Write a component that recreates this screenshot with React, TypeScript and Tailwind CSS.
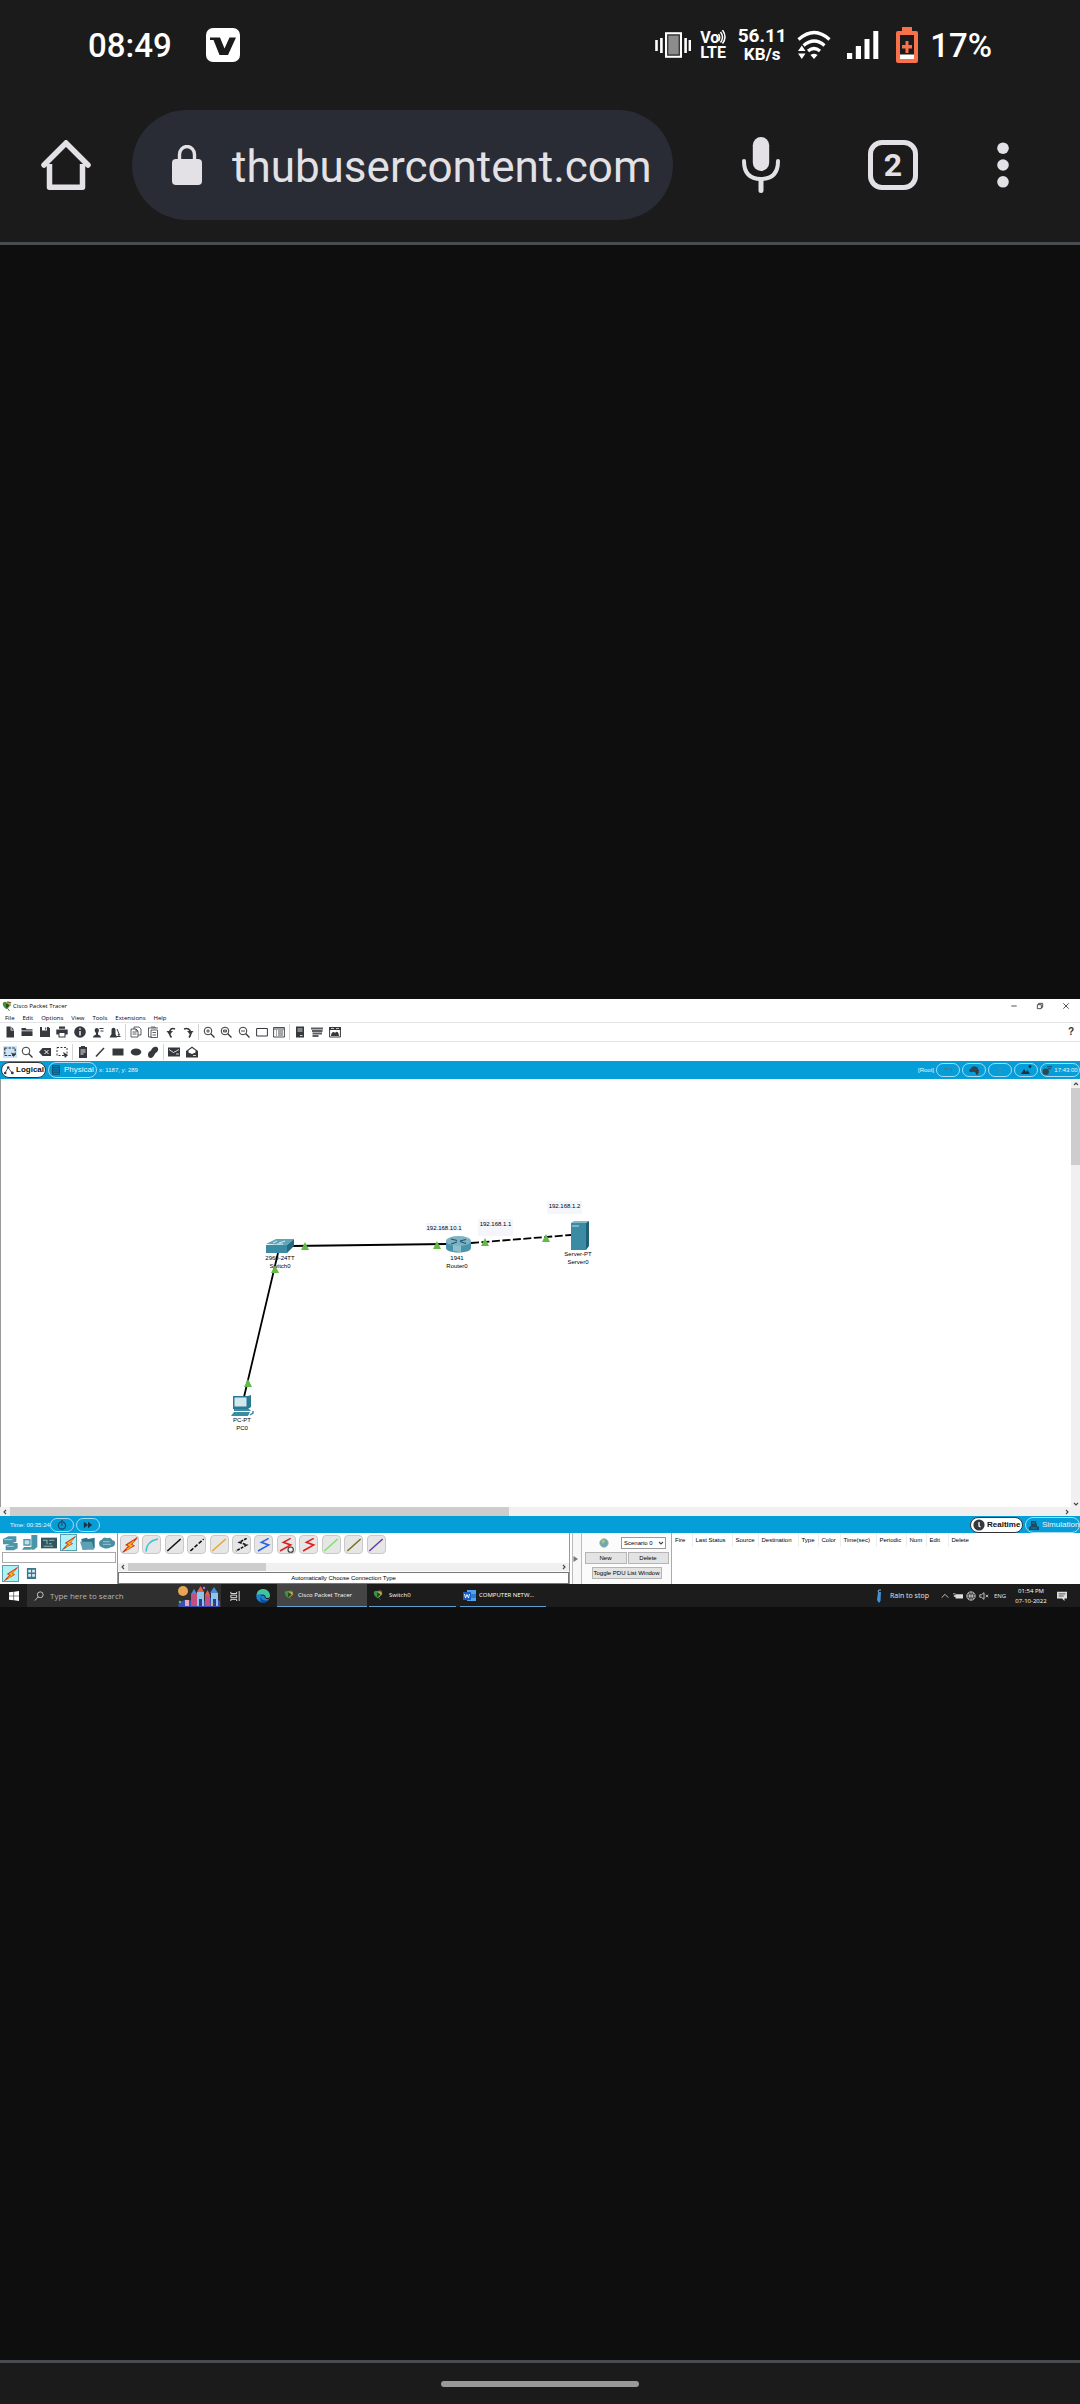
import type { ReactNode } from "react";

const DARK = "#35383c";

function Glyph({ children, className = "size-3" }: { children: ReactNode; className?: string }) {
  return (
    <svg viewBox="0 0 12 12" className={className + " block shrink-0"} fill="none" stroke={DARK} strokeWidth="1" aria-hidden="true">
      {children}
    </svg>
  );
}

const solid = { fill: DARK, stroke: "none" };

const fileTools: [string, ReactNode][] = [
  ["New", <path {...solid} d="M2.5.5h4.2v4h3.3v7H2.5zM7.5.7 10 3.7H7.5z" />],
  ["Open", <path {...solid} d="M.5 2h4l1 1.2h6v1.3H.5zM.5 5.2h11V10H.5z" />],
  ["Save", <path {...solid} fillRule="evenodd" d="M1 1h8.5L11 2.6V11H1zM3 1h5v3.5H3zM6.2 1.5v2.3h1V1.5z" />],
  ["Print", <path {...solid} fillRule="evenodd" d="M3 .5h6v2.3H3zM.3 3.5h11.4v5H9.5v3h-7v-3H.3zM3.5 7v3.5h5V7z" />],
  ["Activity Wizard", <><circle {...solid} cx="6" cy="6" r="5.8" /><path stroke="#fff" strokeWidth="1.4" d="M6 2.3v1.4M6 5v4.5" /></>],
  ["User Profile", <><path {...solid} d="M1 11.5c0-2 2-2.500 3-3V7C2 5 2.500 2 4.800 2S7.500 5 6 7v1.500c1 .5 3 1 3 3z" /><path d="M7.500 2.500h4M8.500 5h3" /></>],
  ["Network Wizard", <><path {...solid} d="M.5 11.500 2.500 8V4c0-3 4-3 4 0v4l1.500 3.500z" /><path d="M8 3l2.500 6M6.500 10.500h5M9 8l1.500 2.500" /></>],
];

const editTools: [string, ReactNode][] = [
  ["Copy", <path strokeWidth=".8" d="M1 3h5l2 2v6H1zM4 3V1h5l2 2v6H8M2.500 6h4M2.500 8h4M6 3v2h2" />],
  ["Paste", <path strokeWidth=".8" d="M1 2h10M1.500 2v9h3M4 4h6.500v7.500H4zM4 1h4v1M5.500 6.500h3.500M5.500 9h3.500" />],
  ["Undo", <><path strokeWidth="1.600" d="M6.500 11.500C4.500 9 4 6.500 5 4.500q1.500-3 5-1.500" /><path {...solid} d="M1.500 5h6.500L4.500 9z" /></>],
  ["Redo", <><path strokeWidth="1.600" d="M7 11.500C9 9 9 6.500 8 4.500Q6 1.500 2 3" /><path {...solid} d="M5 5h6.500L8.500 9z" /></>],
];

function Lens({ children }: { children?: ReactNode }) {
  return (
    <>
      <circle cx="5" cy="5" r="3.800" />
      <path strokeWidth="1.300" d="M7.800 7.800 11.500 11.500" />
      {children}
    </>
  );
}

const zoomTools: [string, ReactNode][] = [
  ["Zoom In", <Lens><path strokeWidth=".8" d="M3 5h4M5 3v4" /></Lens>],
  ["Zoom Reset", <Lens><path strokeWidth=".8" d="M3.500 4h3v2h-3zM5 4v2" /></Lens>],
  ["Zoom Out", <Lens><path strokeWidth=".9" d="M3 5h4" /></Lens>],
  ["Viewport", <path d="M.6 2.500h10.800v7.500H.6z" />],
  ["Workspace List", <path strokeWidth=".9" d="M.6 1.500h10.800v9.500H.6zM.6 3h10.800M3 5h1M5 5h5M3 7h1M5 7h5M3 9h1M5 9h5" />],
];

const paletteTools: [string, ReactNode][] = [
  ["Notes", <><path {...solid} d="M2 .5h8v11H2z" /><path stroke="#fff" strokeWidth=".8" d="M3.500 3h5M3.500 5h5M6 9.500h2.500" /></>],
  ["Custom Devices", <path fill="#5b5e62" stroke="none" d="M0 1.500h12v2H0zM1 4h10.500v2H1zM1.500 6.500H11v2H1.500zM1.500 9h6v2h-6z" />],
  ["Cluster", <><path {...solid} d="M0 1h12v3H0z" /><path d="M.6 3v8h10.800V3" /><path {...solid} d="M2 10c0-4 3-5 4-3 2-3 4 0 4 3z" /><path stroke="#fff" d="M2 2.500h3M7 2.500h3" strokeWidth=".7" /></>],
];

const selectTools: [string, ReactNode][] = [
  ["Select", <><path strokeDasharray="2.500 1.200" strokeWidth="1.200" d="M.8 2h10.400v7.500H.8z" /><path {...solid} d="M7 6.500 11.500 8l-2 3z" /></>],
  ["Inspect", <Lens />],
  ["Delete", <><path {...solid} d="M3.500 2H12v8H3.500L0 6z" /><path stroke="#fff" d="m5.500 4 4 4M9.500 4l-4 4" /></>],
  ["Resize", <><path strokeDasharray="2 1.500" d="M1 1.500h10v8H1z" /><path {...solid} d="m7 6 5 3-3 3z" /></>],
];

const drawTools: [string, ReactNode][] = [
  ["Place Note", <><path {...solid} d="M2 1h8v11H2zM4 0h4v1H4z" /><path stroke="#fff" strokeWidth=".9" d="M3.500 4h5M3.500 6h5M3.500 8h3" /></>],
  ["Draw Line", <path strokeWidth="1.500" d="M2 10.500 10 2" />],
  ["Draw Rectangle", <path {...solid} d="M.5 2.500h11v7H.5z" />],
  ["Draw Ellipse", <ellipse {...solid} cx="6" cy="6" rx="5.300" ry="3.500" />],
  ["Draw Freeform", <path {...solid} d="M2 11.500C0 9 1 6 4 4.500 5 1 8 0 10 1c2.500 2 .5 5-1.500 6-2 4-4 6-6.500 4.500z" />],
];

const pduTools: [string, ReactNode][] = [
  ["Add Simple PDU", <><path {...solid} d="M0 1.500h12v9H0z" /><path stroke="#fff" strokeWidth=".8" d="m1 3.500 4.500 3L11 3.500M8 8h3" /></>],
  ["Add Complex PDU", <><path {...solid} d="M0 5 6 .5 12 5v6.500H0z" /><path fill="#fff" stroke="none" d="M2.500 4.500 6 2l3.500 2.500v2L6 8 2.500 6.500z" /><path stroke="#fff" strokeWidth=".8" d="M7 9.500h3" /></>],
];

function ToolGroup({ items, className, selected }: { items: [string, ReactNode][]; className: string; selected?: string }) {
  return (
    <div className={"grid justify-items-center " + className}>
      {items.map(([label, glyph]) => (
        <button
          key={label}
          type="button"
          aria-label={label}
          className={"flex h-3 w-3.5 items-center justify-center " + (label === selected ? "bg-[#cbe4f8]" : "")}
        >
          <Glyph>{glyph}</Glyph>
        </button>
      ))}
    </div>
  );
}

function Rule() {
  return <span className="mx-px h-4 w-px shrink-0 bg-[#d4d4d4]" />;
}

function StatusBar() {
  return (
    <div className="flex h-[90px] items-center pr-[88px] pl-[88px] text-white">
      <time className="w-[84px] text-[33px] leading-none font-medium">08:49</time>
      <svg viewBox="0 0 34 34" className="ml-[34px] size-[34px]" aria-label="App notification">
        <rect width="34" height="34" rx="7" fill="#fff" />
        <path d="M4 9.500h10l4.500 11 5-11H30L22 27h-8.500L7.500 12H4z" fill="#1b1b1b" />
      </svg>
      <span className="flex-1" />
      <svg viewBox="0 0 36 26" className="h-[26px] w-9" aria-label="Vibrate">
        <rect x="11" y="1.200" width="15" height="23.600" fill="#8c8c8c" stroke="#fff" strokeWidth="2" />
        <rect x="12.800" y="3" width="11.400" height="20" fill="none" stroke="#1b1b1b" strokeWidth="1" />
        <path stroke="#fff" strokeWidth="2.600" d="M1.500 8v11M6.400 6v15M30.600 6v15M34.900 8v11" />
      </svg>
      <div className="ml-[9px] flex w-[27px] flex-col text-[16px] leading-[15px] font-bold">
        <span className="flex">
          Vo
          <svg viewBox="0 0 8 14" className="-ml-px h-3.5 w-2" fill="none" stroke="#fff" strokeWidth="1.500" aria-hidden="true">
            <path d="M.5 4q2.500 3.500 0 7M2.500 2q4 5 0 10.500M4.500 0q5 7 0 13.500" />
          </svg>
        </span>
        <span>LTE</span>
      </div>
      <div className="ml-2.5 flex w-[50px] flex-col items-center text-[19px] leading-[19px] font-bold">
        <span>56.11</span>
        <span className="text-[17px]">KB/s</span>
      </div>
      <svg viewBox="0 0 34 30" className="ml-2.5 h-[30px] w-[34px]" fill="none" stroke="#fff" strokeWidth="3.200" aria-label="Wi-Fi">
        <path d="M1.500 9.500q16-14 31 0M6.500 15.500q11-9 21 0M11 21q6-5 12 0" />
        <path fill="#fff" stroke="none" d="M13.500 25q3.500-2.500 7 0L17 29zM4.800 15.500 8.500 21h-7.500zM1 23.500h7.500L4.800 29z" />
      </svg>
      <svg viewBox="0 0 32 28" className="ml-4 h-7 w-8" aria-label="Signal">
        <path fill="#fff" d="M0 22h5.200v6H0zM8.800 15H14v13H8.800zM17.500 8h5v20h-5zM26.300 0h5v28h-5z" />
      </svg>
      <svg viewBox="0 0 22 36" className="ml-[17px] h-9 w-[22px]" aria-label="Battery">
        <path fill="#f8714a" fillRule="evenodd" d="M6 0h10v4h4q2 0 2 2v28q0 2-2 2H2q-2 0-2-2V6q0-2 2-2h4zM4 8v24h14V8z" />
        <path fill="#f8714a" d="M9.500 14h3v4H16v3.500h-3.500V26h-3v-4.500H6V18h3.500z" />
        <path fill="#fff" d="M4 27.500h14V32H4z" />
      </svg>
      <span className="ml-3 text-[33px] leading-none font-medium">17%</span>
    </div>
  );
}

function BrowserBar() {
  return (
    <div className="flex h-[152px] items-start pt-5 text-[#e3e1e6]">
      <button type="button" aria-label="Home" className="flex h-[110px] w-[132px] items-center justify-center">
        <svg viewBox="0 0 50 50" className="size-[50px]" fill="none" stroke="currentColor" strokeWidth="5.500" aria-hidden="true">
          <path strokeLinejoin="round" d="M8.500 24v23.200h33V24" />
          <path strokeLinecap="round" d="M3 25 25 3l22 22" />
        </svg>
      </button>
      <div className="flex h-[110px] min-w-0 flex-1 items-center rounded-full bg-[#292c34] pl-10">
        <svg viewBox="0 0 30 40" className="h-10 w-[30px] shrink-0" aria-label="Secure">
          <rect y="14" width="30" height="26" rx="4" fill="currentColor" />
          <path d="M7.500 15V9.500a7.500 8 0 0 1 15 0V15" fill="none" stroke="currentColor" strokeWidth="3.400" />
        </svg>
        <input
          aria-label="Address"
          defaultValue="thubusercontent.com"
          className="ml-[30px] w-full min-w-0 bg-transparent pt-1 text-[44px] text-[#e3e1e6] outline-none"
        />
      </div>
      <button type="button" aria-label="Voice search" className="ml-[43px] flex h-[110px] w-[90px] items-center justify-center">
        <svg viewBox="0 0 38 56" className="h-14 w-[38px]" fill="none" stroke="currentColor" aria-hidden="true">
          <rect x="10.800" y="0" width="16.400" height="34" rx="8.200" fill="currentColor" stroke="none" />
          <path strokeWidth="4" strokeLinecap="round" d="M2 24q0 18 17 18t17-18" />
          <path strokeWidth="5" strokeLinecap="round" d="M19 43v10.500" />
        </svg>
      </button>
      <button type="button" aria-label="2 open tabs" className="mt-[30px] ml-[62px] flex size-[50px] items-center justify-center rounded-[14px] border-[5px] border-[#e3e1e6] text-[32px] leading-none font-bold">
        2
      </button>
      <button type="button" aria-label="Menu" className="ml-[41px] flex h-[110px] w-[121px] items-center justify-start pl-[38px]">
        <svg viewBox="0 0 12 46" className="h-[46px] w-3" fill="currentColor" aria-hidden="true">
          <circle cx="6" cy="6.200" r="5.800" />
          <circle cx="6" cy="23" r="5.800" />
          <circle cx="6" cy="39.800" r="5.800" />
        </svg>
      </button>
    </div>
  );
}

function PacketLogo() {
  return (
    <svg viewBox="0 0 12 12" className="size-2.5 shrink-0" aria-hidden="true">
      <path d="M2 4q2-4 8-3l1 4-5 5z" fill="#c9a43a" />
      <path d="M1 3q0-2 3-2l5 4-3 5q-5-2-5-7z" fill="#3f9142" />
      <path d="m5 3 4 2-4 4z" fill="#1c4a20" />
      <path d="M7 9l2 3M6 1l5 1" stroke="#555" />
    </svg>
  );
}

function TitleBar() {
  return (
    <div className="flex h-3.5 items-center pl-0.5">
      <PacketLogo />
      <h1 className="ml-px flex-1 text-[6px] leading-none text-black">Cisco Packet Tracer</h1>
      <div className="flex items-center gap-[14px] pr-2">
        {[
          ["Minimize", "M2 6h8"],
          ["Restore", "M2 4h6v6H2zM4 4V2h6v6H8"],
          ["Close", "m2 2 8 8M10 2l-8 8"],
        ].map(([label, d]) => (
          <button key={label} type="button" aria-label={label} className="flex h-2.5 w-3 items-center justify-center">
            <Glyph className="size-2">
              <path d={d} strokeWidth="1.300" />
            </Glyph>
          </button>
        ))}
      </div>
    </div>
  );
}

const pill = "flex h-[14px] items-center justify-center rounded-full border border-[#a5dbf2]";

function TopBlueBar() {
  return (
    <div className="flex h-[18px] items-center gap-0.5 bg-[#069ed9] pl-px text-[6px] leading-none text-[#e8f7fd]">
      <button type="button" className="flex h-4 w-[45px] items-center gap-0.5 rounded-full border border-[#333] bg-white pl-0.5 text-[8px] font-bold text-[#111]">
        <Glyph className="h-2.5 w-2.5">
          <path d="M1 10 5 3l5 7" />
          <circle {...solid} cx="5" cy="3" r="1.500" />
          <circle {...solid} cx="1.500" cy="9.500" r="1.500" />
          <circle {...solid} cx="10" cy="9.500" r="1.700" />
        </Glyph>
        Logical
      </button>
      <button type="button" className="flex h-4 w-[49px] items-center gap-1 rounded-full border border-[#a5dbf2] pl-[3px] text-[8px]">
        <svg viewBox="0 0 9 11" className="h-2.5 w-2 shrink-0" aria-hidden="true">
          <path d="M.5.500h8v10h-8zM.5 3h8M.5 5.500h8M.5 8h8" fill="#0a7fb5" stroke="#0e4664" strokeWidth=".8" />
        </svg>
        Physical
      </button>
      <span>x: 1187, y: 289</span>
      <span className="flex-1" />
      <span>[Root]</span>
      <button type="button" aria-label="Back" className={pill + " w-6"}>
        <Glyph className="size-2.5"><path stroke="#3c7f9c" strokeWidth="1.400" d="M10 9V4.500H2M4 2.500l-2 2 2 2" /></Glyph>
      </button>
      <button type="button" aria-label="New Cluster" className={pill + " w-6"}>
        <Glyph className="size-3"><path fill="#33464f" stroke="none" d="M1 7q0-2 2-2.500Q4 1.500 7 2.500q3-.5 3 2.500 2 2 0 3H2z" /><path strokeWidth="1.300" d="M9 6v5M7.500 9 9 7.500 10.500 9" /></Glyph>
      </button>
      <button type="button" aria-label="Move Object" className={pill + " w-6"}>
        <Glyph className="size-2.5"><path stroke="#3c8fb2" d="M6 1v10M1 6h10M4 3l2-2 2 2M4 9l2 2 2-2" /></Glyph>
      </button>
      <button type="button" aria-label="Set Background" className={pill + " w-6"}>
        <Glyph className="size-3"><path fill="#23313a" stroke="none" d="m1 10 3-5 2 3 1.500-2 2.500 4z" /><circle fill="#23313a" stroke="none" cx="10" cy="2.500" r="1.400" /></Glyph>
      </button>
      <button type="button" aria-label="Environment" className={pill + " w-10 gap-0.5"}>
        <Glyph className="size-2.5"><circle fill="#33464f" stroke="none" cx="4.500" cy="8" r="3.800" /><path stroke="#23313a" d="M6 2h6M7 4.500h4" /></Glyph>
        <span>17:43:00</span>
      </button>
    </div>
  );
}

const nodeText = "absolute -translate-x-1/2 text-center text-[6px] leading-[8px] whitespace-nowrap text-black";
const noteText = "absolute bg-[#f5f5fc] pt-0.5 text-center text-[6px] leading-[6px] text-black";
const linkLights = [
  [304, 167],
  [436, 166],
  [484, 163],
  [545, 159],
  [274, 190],
  [247, 304],
];

function Topology() {
  return (
    <div className="relative min-w-0 flex-1 overflow-hidden border-l border-[#999] bg-white">
      <div className={noteText + " top-[144px] left-[425px] h-2 w-9"}><span className="-mx-1">192.168.10.1</span></div>
      <div className={noteText + " top-[140px] left-[477px] h-[17px] w-[35px]"}>192.168.1.1</div>
      <div className={noteText + " top-[122px] left-[546px] h-[13px] w-[35px]"}>192.168.1.2</div>
      <div className={nodeText + " top-[175px] left-[279px]"}>2960-24TT<br />Switch0</div>
      <div className={nodeText + " top-[175px] left-[456px]"}>1941<br />Router0</div>
      <div className={nodeText + " top-[171px] left-[577px]"}>Server-PT<br />Server0</div>
      <div className={nodeText + " top-[337px] left-[241px]"}>PC-PT<br />PC0</div>
      <svg className="absolute inset-0 size-full" aria-label="Network links" fill="none">
        <path d="M291 167 445 165M277 174 243 318" stroke="#000" strokeWidth="1.800" />
        <path d="M470 164 570 156" stroke="#000" strokeWidth="1.800" strokeDasharray="8 2.500" />
        <path d="M265 165 275 160h18l-7 6z" fill="#5fa5b8" />
        <path d="M265 166h21v8h-21z" fill="#3a8ba3" />
        <path d="m286 166 7-6v7l-7 7z" fill="#24697f" />
        <path d="m272 164 4-2m2 2 6-2m-8 3h6" stroke="#d6edf4" />
        <path d="M445 162v7c0 6 25 6 25 0v-7z" fill="#4a94ab" />
        <path d="M452 172v-6h8v7z" fill="#8cc0d0" />
        <ellipse cx="457.500" cy="162" rx="12.500" ry="5" fill="#7fb2c3" />
        <path d="m450 160 6 1.500m3 1 6 2m0-4-6 1.500m-3 1-6 2" stroke="#1f5468" strokeWidth="1.200" />
        <path d="m570 144 3-2h15l-3 2z" fill="#7fb8c8" />
        <path d="M570 144h15v27h-15z" fill="#3a8ba3" />
        <path d="m585 144 3-2v25l-3 4z" fill="#1d6076" />
        <path d="M571 147h7" stroke="#b9dde8" />
        <path d="M232 317h15l3-1v12l-3 2h-15z" fill="#2c7a92" />
        <path d="M233.500 318.500h12v9h-12z" fill="#d1e8f1" />
        <path d="M233 330h15l2 2h-17zM230 337l3-4h16l-2 4z" fill="#3a8ba3" />
        <path d="m249 336 3-2v-2" stroke="#3a8ba3" strokeWidth="1.500" />
        {linkLights.map(([x, y]) => (
          <path key={x + "-" + y} d={`M${x - 4} ${y + 4}h8l-4-8z`} fill="#62bb46" />
        ))}
      </svg>
    </div>
  );
}

function Chevron({ d }: { d: string }) {
  return (
    <Glyph className="size-1.5">
      <path d={d} strokeWidth="2.200" stroke="#444" />
    </Glyph>
  );
}
const LEFT = "M8 2 4 6l4 4";
const RIGHT = "m4 2 4 4-4 4";
const UP = "m2 8 4-4 4 4";
const DOWN = "m2 4 4 4 4-4";

function Workspace() {
  return (
    <>
      <div className="flex h-[428px]">
        <Topology />
        <div className="flex w-[9px] flex-col items-center bg-[#f0f0f0]">
          <span className="flex h-[9px] items-center"><Chevron d={UP} /></span>
          <span className="h-[77px] w-full bg-[#cdcdcd]" />
          <span className="flex-1" />
          <Chevron d={DOWN} />
        </div>
      </div>
      <div className="flex h-[9px] items-center bg-[#f0f0f0] pr-2.5 pl-0.5">
        <Chevron d={LEFT} />
        <span className="ml-0.5 h-full w-[499px] bg-[#cdcdcd]" />
        <span className="flex-1" />
        <Chevron d={RIGHT} />
      </div>
    </>
  );
}

function BottomBlueBar() {
  return (
    <div className="flex h-[17px] items-center gap-0.5 bg-[#069ed9] pl-2.5 text-[6px] leading-none text-[#e8f7fd]">
      <span className="w-[38px] whitespace-nowrap">Time: 00:35:24</span>
      <button type="button" aria-label="Power cycle devices" className={pill + " w-6"}>
        <Glyph className="size-2.5"><circle cx="6" cy="6.500" r="4.300" stroke="#1d4860" strokeWidth="1.500" /><path stroke="#1d4860" strokeWidth="1.500" d="M6 4v3M6 0v2" /></Glyph>
      </button>
      <button type="button" aria-label="Fast forward" className={pill + " w-6"}>
        <Glyph className="size-2.5"><path fill="#1d3440" stroke="none" d="m1 2 5 4-5 4zM6 2l5 4-5 4z" /></Glyph>
      </button>
      <span className="flex-1" />
      <button type="button" className="flex h-4 w-[53px] items-center gap-0.5 rounded-full border border-[#333] bg-white pl-0.5 text-[8px] font-bold text-[#111]">
        <Glyph><circle {...solid} cx="6" cy="6" r="5.600" /><path stroke="#fff" strokeWidth="1.300" d="M6 3v4l1.500 1" /></Glyph>
        Realtime
      </button>
      <button type="button" className="flex h-4 w-[55px] items-center gap-0.5 rounded-full border border-[#a5dbf2] pl-0.5 text-[8px]">
        <Glyph><path fill="#1d4860" stroke="none" d="M3 2h5l1 5 2 1v3H1V8l2-1z" /><path stroke="#069ed9" strokeWidth=".8" d="M4 4h3M3 9h6" /></Glyph>
        Simulation
      </button>
    </div>
  );
}

const bolt = (
  <>
    <path d="M11.500.500 3 6l2 .8L.5 11.500 9 6.500 7 5.500z" fill="#e2441d" stroke="#d43a16" strokeWidth=".8" />
    <path d="M9 3 4.500 6l2 .8-3 2.700L8 6.500 6 5.700z" fill="#ffd21f" stroke="#f7b21c" strokeWidth=".6" />
  </>
);

const deviceKinds: [string, ReactNode][] = [
  ["Network Devices", <><path fill="#4b95aa" stroke="none" d="M0 3 4 1h6v4l-3 1h4v4l-3 1.500H2V8l3-1H0z" /><path stroke="#a9d3df" strokeWidth=".7" d="M1 3.500h6M3 8.500h5" /></>],
  ["End Devices", <><path fill="#4b95aa" stroke="none" d="M7 0h4.500v9L9 11H7zM1 3h5.500v5H1zM0 11l1.500-2h6L6.500 11z" /><path fill="#bfe0ea" stroke="none" d="M2 4h3.500v3H2z" /></>],
  ["Components", <><path fill="#31555f" stroke="none" d="M0 2h12v8H0z" /><path stroke="#8fb6bf" strokeWidth=".8" d="M1.500 4h3v3M6 4h4M6 6.500h2M2 8.500h7" /></>],
  ["Connections", bolt],
  ["Miscellaneous", <><path fill="#2e7187" stroke="none" d="M1 3l4-1 1 1 5-1v8l-9 1z" /><path fill="#5fa1b4" stroke="none" d="M0 5h9l1.500 6H2z" /></>],
  ["Multiuser Connection", <><path fill="#4b8ea3" stroke="none" d="M0 6q0-2 2-2.500Q4 1 6 2.500 9 1 10 4q2 0 2 2 0 3-3 3-3 2-6 .5Q0 9 0 6z" /><path stroke="#9ccad6" strokeWidth=".7" d="M3 5h5M3 7h6" /></>],
];

const line = "M1 10.500 11 1.500";
const zig = "M9.500 1 4 4 9.500 6 1.500 10.500";
const cables: [string, ReactNode][] = [
  ["Automatic", bolt],
  ["Console", <path stroke="#43c3d6" strokeWidth="1.100" d="M1.500 11Q2 3 10.500 1.500" />],
  ["Copper Straight-Through", <path stroke="#111" strokeWidth="1.200" d={line} />],
  ["Copper Cross-Over", <path stroke="#111" strokeWidth="1.200" strokeDasharray="3 1.200" d={line} />],
  ["Fiber", <path stroke="#eda52f" strokeWidth="1.200" d={line} />],
  ["Phone", <path stroke="#111" strokeWidth="1.200" strokeDasharray="2.200 .8" d={zig} />],
  ["Coaxial", <path stroke="#2f63e0" strokeWidth="1.200" d={zig} />],
  ["Serial DCE", <><path stroke="#e01f1f" strokeWidth="1.200" d={zig} /><circle cx="9.500" cy="9.500" r="2" strokeWidth=".8" fill="#eee" /></>],
  ["Serial DTE", <path stroke="#e01f1f" strokeWidth="1.200" d={zig} />],
  ["Octal", <path stroke="#7be860" strokeWidth="1.200" d={line} />],
  ["IoT Custom Cable", <path stroke="#7a7420" strokeWidth="1.200" d={line} />],
  ["USB", <path stroke="#6840a8" strokeWidth="1.200" d={line} />],
];

const columns: [string, string][] = [
  ["Fire", "w-5"],
  ["Last Status", "w-10"],
  ["Source", "w-[26px]"],
  ["Destination", "w-10"],
  ["Type", "w-5"],
  ["Color", "w-[22px]"],
  ["Time(sec)", "w-9"],
  ["Periodic", "w-[30px]"],
  ["Num", "w-5"],
  ["Edit", "w-[22px]"],
  ["Delete", ""],
];

const flatButton = "h-3 border border-[#b5b5b5] bg-[#e3e3e3] text-[6px] leading-none whitespace-nowrap";

function DevicePanel() {
  return (
    <div className="flex h-[51px] bg-white text-black">
      <div className="w-[118px] border-r border-[#999]">
        <div className="grid h-[19px] grid-cols-6 items-center justify-items-center pl-px">
          {deviceKinds.map(([label, art]) => (
            <button
              key={label}
              type="button"
              aria-label={label}
              className={label === "Connections" ? "flex size-[17px] items-center justify-center border border-[#5b9fae] bg-[#aef1f7]" : "flex items-center justify-center"}
            >
              <Glyph className={label === "Connections" ? "size-3.5" : "size-4"}>{art}</Glyph>
            </button>
          ))}
        </div>
        <input aria-label="Search devices" className="ml-0.5 block h-[11px] w-[114px] border border-[#aaa] bg-white outline-none" />
        <div className="mt-0.5 flex items-center gap-[7px] pl-0.5">
          <button type="button" aria-label="Connections" className="flex size-[17px] items-center justify-center border border-[#5b9fae] bg-[#aef1f7]">
            <Glyph className="size-3.5">{bolt}</Glyph>
          </button>
          <button type="button" aria-label="Structured Cabling">
            <Glyph className="size-[11px]">
              <path fill="#39758b" stroke="none" d="M1 0h10v12H1z" />
              <path fill="#d6ebf2" stroke="none" d="M2.500 2h3v3h-3zM6.700 2h3v3h-3zM2.500 6.500h3v3h-3zM6.700 6.500h3v3h-3z" />
            </Glyph>
          </button>
        </div>
      </div>
      <div className="flex w-[452px] flex-col border-r border-[#999]">
        <div className="grid h-[30px] w-[271px] grid-cols-12 items-start pt-0.5 pl-0.5">
          {cables.map(([label, art]) => (
            <button key={label} type="button" aria-label={label} className="flex size-[19px] items-center justify-center rounded-sm border border-[#c9c9c9] bg-[#e6e6e6]">
              <Glyph className="size-4">{art}</Glyph>
            </button>
          ))}
        </div>
        <div className="flex h-2 items-center bg-[#f0f0f0] pr-0.5 pl-0.5">
          <Chevron d={LEFT} />
          <span className="ml-0.5 h-full w-[138px] bg-[#cdcdcd]" />
          <span className="flex-1" />
          <Chevron d={RIGHT} />
        </div>
        <p className="mt-px flex flex-1 items-center justify-center border border-[#777] text-[6px] leading-none">Automatically Choose Connection Type</p>
      </div>
      <button type="button" aria-label="Collapse panel" className="ml-0.5 flex w-2.5 items-center border-x border-[#bbb] bg-[#f7f7f7]">
        <Glyph className="size-1.5"><path fill="#777" stroke="none" d="m1 0 9 6-9 6z" /></Glyph>
      </button>
      <div className="flex w-[90px] flex-col items-center gap-[3px] border-r border-[#aaa] bg-[#fbfbfb] pt-1">
        <div className="flex items-center gap-3 pl-3">
          <Glyph className="size-2.5"><circle cx="6" cy="6" r="5" fill="#6fa7ac" stroke="#8fb0b6" /><path fill="#a9c77c" stroke="none" d="M3 3q3-2 4 0T4 7z" /></Glyph>
          <span className="relative">
            <select aria-label="Scenario" className="block h-3 w-[45px] appearance-none border border-[#999] bg-white pl-0.5 text-[6px] leading-none">
              <option>Scenario 0</option>
            </select>
            <span className="pointer-events-none absolute top-[3px] right-0.5"><Chevron d={DOWN} /></span>
          </span>
        </div>
        <div className="flex gap-px">
          <button type="button" className={flatButton + " w-[42px]"}>New</button>
          <button type="button" className={flatButton + " w-[41px]"}>Delete</button>
        </div>
        <button type="button" className={flatButton + " w-[70px]"}>Toggle PDU List Window</button>
      </div>
      <div className="min-w-0 flex-1">
        <table className="w-full table-fixed text-left text-[6px] leading-none">
          <thead>
            <tr className="h-3.5">
              {columns.map(([name, width]) => (
                <th key={name} scope="col" className={"border-r border-[#eee] p-0 pl-[3px] align-middle font-normal whitespace-nowrap last:border-r-0 " + width}>{name}</th>
              ))}
            </tr>
          </thead>
        </table>
      </div>
    </div>
  );
}

function Taskbar() {
  const app = "mr-0.5 flex h-full items-center border-b border-[#5f9fd0] whitespace-nowrap";
  return (
    <div className="flex h-[23px] items-center bg-[#1c1c1c] font-['Open_Sans',sans-serif] text-[6px] leading-none text-white">
      <button type="button" aria-label="Start" className="flex h-full w-[27px] items-center justify-center">
        <svg viewBox="0 0 11 11" className="size-2.5" fill="#fff" aria-hidden="true"><path d="M0 1.500 5 .8v4.400H0zM5.600.700 11 0v5.200H5.600zM0 5.800h5v4.400l-5-.7zM5.600 5.800H11V11l-5.400-.7z" /></svg>
      </button>
      <label className="flex h-full w-[194px] items-center bg-[#2f2f2f] pl-[7px]">
        <Glyph className="size-2.5"><circle cx="7.500" cy="4.500" r="3.500" stroke="#ddd" /><path stroke="#ddd" d="M5 7 1 11.500" /></Glyph>
        <input aria-label="Search" placeholder="Type here to search" className="ml-1.5 w-[128px] bg-transparent text-[8px] leading-none text-[#ccc] outline-none placeholder:text-[#b5b5b5]" />
        <svg viewBox="0 0 44 22" className="h-[22px] w-11 shrink-0" aria-hidden="true">
          <circle cx="6" cy="6" r="5" fill="#e8a553" />
          <path d="M1 20q6-8 14-4t14-1 14 1v6H2z" fill="#3c4fb0" />
          <path d="M14 9h6v12h-6zM28 10h5v11h-5z" fill="#c1507f" />
          <path d="M20 7h7v14h-7zM34 8h7v13h-7z" fill="#8fc3ea" />
          <path d="m14 9 3-5 3 5zM33 8l4-6 4 6z" fill="#4a8bd8" />
          <path d="m20 7 3.500-6L27 7zM28 10l2.500-5 2.500 5z" fill="#e5614f" />
          <path d="M8 15h4v6H8z" fill="#e9a8b8" />
          <path d="M22 14h3v7h-3zM36 14h3v7h-3z" fill="#2d3c8c" />
          <circle cx="27" cy="3" r="1.300" fill="#b46be0" />
          <circle cx="3" cy="17" r="1.300" fill="#49b58a" />
          <circle cx="35" cy="19" r="1.300" fill="#f2a65a" />
        </svg>
      </label>
      <button type="button" aria-label="Task view" className="flex w-[27px] justify-center">
        <Glyph className="size-2.5"><path stroke="#ddd" strokeWidth="1.200" d="M1 1v2h7V1M1 5h7v3H1zM1 12v-2h7v2M11 0v12" /></Glyph>
      </button>
      <button type="button" aria-label="Microsoft Edge" className="flex w-[29px] justify-center">
        <svg viewBox="0 0 14 14" className="size-3.5" aria-hidden="true">
          <circle cx="7" cy="7" r="6.800" fill="#1f7fd0" />
          <path d="M.5 6Q1.500 0 7 0q6.500.500 7 6.500 0 2-3 2.500-2.500 0-2-2Q7 3.500.5 6z" fill="#3fc59a" />
          <path d="M5 7q-.5 5 6 4.500l2-1Q11 14 7 13.800 3 13 5 7z" fill="#0d4a9c" />
          <path d="M5.500 6.500q4-1 3.500 1.500 0 2 4 1.500" fill="none" stroke="#1c1c1c" />
        </svg>
      </button>
      <button type="button" className={app + " w-[90px] gap-1 bg-[#454545] pl-[7px]"}><PacketLogo />Cisco Packet Tracer</button>
      <button type="button" className={app + " w-[87px] gap-1.5 pl-1"}><PacketLogo />Switch0</button>
      <button type="button" className={app + " ml-0.5 w-[86px] gap-[3px] pl-[3px]"}>
        <svg viewBox="0 0 13 11" className="h-[11px] w-[13px]" aria-hidden="true">
          <path d="M4 0h9v11H4z" fill="#4fa3ea" /><path d="M4 4h9v4H4z" fill="#2b7cd3" /><path d="M0 2h8v8H0z" fill="#185abd" />
          <path d="m1.500 4 1 4L4 4.500 5.500 8l1-4" stroke="#fff" fill="none" strokeWidth=".9" />
        </svg>
        COMPUTER NETW...
      </button>
      <span className="flex-1" />
      <svg viewBox="0 0 6 14" className="h-3.5 w-1.5" aria-hidden="true"><path d="M2 3h3l-.5 9L3 14 1 11z" fill="#3f93da" /><path d="M2 3q0-3 3-2" stroke="#aaa" fill="none" /></svg>
      <span className="ml-2 w-[42px] text-[7px] whitespace-nowrap text-[#e5e5e5]">Rain to stop</span>
      <div className="ml-2 flex items-center gap-[3px]">
        <Glyph className="size-2.5"><path stroke="#ddd" d="m2 8 4-4 4 4" /></Glyph>
        <Glyph className="size-2.5"><path fill="#ddd" stroke="none" d="M3 4h9v5H3zM0 3h3v1H0zM1 5h2v2H1z" /></Glyph>
        <Glyph className="size-2.5"><circle stroke="#ddd" cx="6" cy="6" r="5" /><path stroke="#ddd" strokeWidth=".9" d="M1 6h10M6 1v10M3 2q3 4 0 8M9 2q-3 4 0 8" /></Glyph>
        <Glyph className="size-2.5"><path stroke="#ddd" d="M1 4.500h2L6 2v8L3 7.500H1zM8 4.500l3 3M11 4.500l-3 3" /></Glyph>
      </div>
      <span className="ml-[5px] w-4 text-[#e5e5e5]">ENG</span>
      <time className="ml-1 flex w-[34px] flex-col items-center gap-1 whitespace-nowrap text-white">
        <span>01:54 PM</span>
        <span>07-10-2022</span>
      </time>
      <button type="button" aria-label="Notifications" className="mr-[13px] ml-[9px]">
        <Glyph className="size-2.5"><path fill="#ddd" stroke="none" d="M0 1h12v8H9v3L6 9H0z" /><path stroke="#1c1c1c" strokeWidth=".8" d="M2 3.500h8M2 6h6" /></Glyph>
      </button>
    </div>
  );
}

function PacketTracer() {
  return (
    <section aria-label="Cisco Packet Tracer" className="w-full overflow-hidden bg-white font-['Liberation_Sans',Arial,sans-serif]">
      <div className="font-['Open_Sans',sans-serif]">
        <TitleBar />
        <nav className="flex h-[9px] items-center gap-2 pl-[5px] text-[6px] leading-none text-black">
          {["File", "Edit", "Options", "View", "Tools", "Extensions", "Help"].map((name) => (
            <button key={name} type="button">{name}</button>
          ))}
        </nav>
      </div>
      <div className="flex h-5 items-center border-y border-[#e4e4e4]">
        <ToolGroup items={fileTools} className="w-[124px] grid-cols-7 pl-px" />
        <Rule />
        <ToolGroup items={editTools} className="w-[70px] grid-cols-4" />
        <Rule />
        <ToolGroup items={zoomTools} className="w-[88px] grid-cols-5" />
        <Rule />
        <ToolGroup items={paletteTools} className="w-[53px] grid-cols-3" />
        <button type="button" aria-label="Help" className="mr-1.5 ml-auto text-[10px] leading-none font-bold text-[#333]">?</button>
      </div>
      <div className="flex h-[19px] items-center">
        <ToolGroup items={selectTools} className="w-[71px] grid-cols-4 pl-px" selected="Select" />
        <Rule />
        <ToolGroup items={drawTools} className="w-[88px] grid-cols-5" />
        <Rule />
        <ToolGroup items={pduTools} className="w-[36px] grid-cols-2" />
      </div>
      <TopBlueBar />
      <Workspace />
      <BottomBlueBar />
      <DevicePanel />
      <Taskbar />
    </section>
  );
}

export default function App() {
  return (
    <div className="flex min-h-screen flex-col bg-[#0e0e0e] font-[Roboto,sans-serif]">
      <header className="border-b-3 border-[#484c52] bg-[#1b1b1b]">
        <StatusBar />
        <BrowserBar />
      </header>
      <main className="flex flex-1 items-center pt-px">
        <PacketTracer />
      </main>
      <footer className="flex h-11 justify-center border-t-3 border-[#484c52] bg-[#1b1b1b] pt-[18px]">
        <span className="h-1.5 w-[198px] rounded-full bg-[#999]" />
      </footer>
    </div>
  );
}
